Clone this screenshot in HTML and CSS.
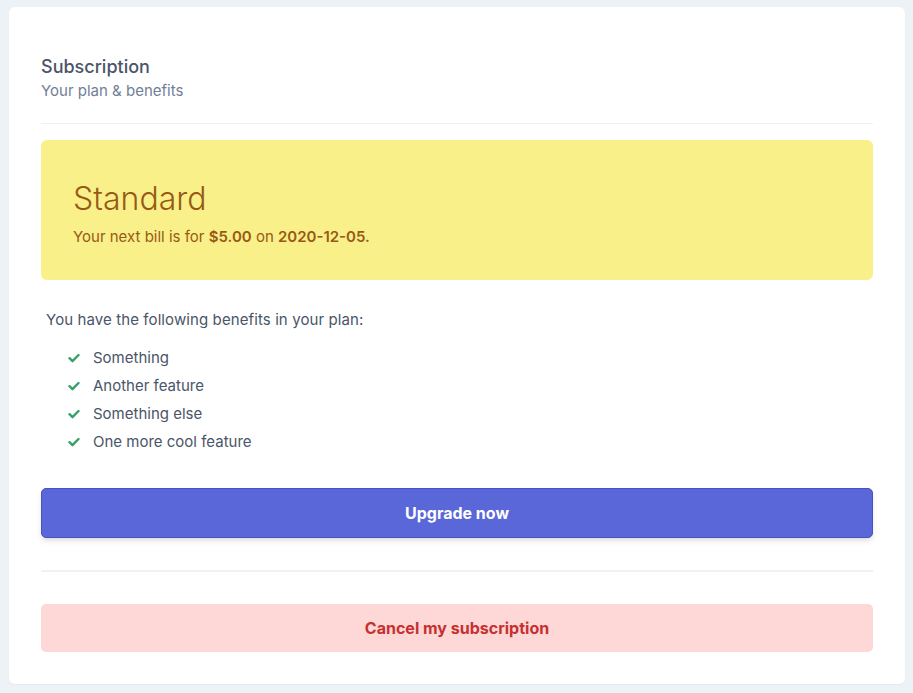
FILE: index.html
```html
<!DOCTYPE html>
<html lang="en">
  <head>
    <meta charset="utf-8" />
    <title>Subscription</title>
    <link rel="stylesheet" href="styles.css">
  </head>
  <body>
    <div class="card">
      <div class="header">
        <h3 class="title">Subscription</h3>
        <p class="subtitle">Your plan &amp; benefits</p>
      </div>

      <div class="plan">
        <h2 class="plan-name">Standard</h2>
        <p class="plan-bill">
          Your next bill is for <b>$5.00</b> on <b>2020-12-05.</b>
        </p>
      </div>

      <p class="benefits-intro">You have the following benefits in your plan:</p>
      <ul class="benefits">
        <li>
          <svg class="check" viewBox="0 0 12 12" width="12" height="12">
            <path d="M1.5 6.2l3 3 6-6.2" />
          </svg>
          Something
        </li>
        <li>
          <svg class="check" viewBox="0 0 12 12" width="12" height="12">
            <path d="M1.5 6.2l3 3 6-6.2" />
          </svg>
          Another feature
        </li>
        <li>
          <svg class="check" viewBox="0 0 12 12" width="12" height="12">
            <path d="M1.5 6.2l3 3 6-6.2" />
          </svg>
          Something else
        </li>
        <li>
          <svg class="check" viewBox="0 0 12 12" width="12" height="12">
            <path d="M1.5 6.2l3 3 6-6.2" />
          </svg>
          One more cool feature
        </li>
      </ul>

      <button class="btn btn-upgrade">Upgrade now</button>

      <hr class="divider" />

      <button class="btn btn-cancel">Cancel my subscription</button>
    </div>
  </body>
</html>
```

FILE: styles.css
```css
body {
  margin: 0;
  padding: 7px 8px 9px 9px;
  background-color: #edf2f7;
  font-family: Inter, "Noto Sans", sans-serif;
  color: #4a5568;
}

.card {
  background-color: white;
  border-radius: 6px;
  padding: 48px 32px 32px 32px;
  box-shadow: 0 1px 2px rgba(0, 0, 0, 0.04);
}

.header {
  padding-bottom: 20px;
  border-bottom: 1px solid #edf2f7;
}

.title {
  margin: 0;
  font-size: 18px;
  line-height: 24px;
  font-weight: 500;
  color: #4a5568;
}

.subtitle {
  margin: 0;
  font-size: 15px;
  line-height: 24px;
  color: #718096;
}

.plan {
  margin-top: 16px;
  background-color: #faf089;
  border-radius: 6px;
  padding: 39px 32px 31px 32px;
  color: #975a16;
}

.plan-name {
  margin: 0;
  font-size: 32px;
  line-height: 40px;
  font-weight: 300;
}

.plan-bill {
  margin: 6px 0 0 0;
  font-size: 15px;
  line-height: 24px;
}

.plan-bill b {
  font-weight: 600;
}

.benefits-intro {
  margin: 28px 0 0 5px;
  font-size: 15px;
  line-height: 24px;
  letter-spacing: 0.1px;
}

.benefits {
  list-style: none;
  margin: 12px 0 0 0;
  padding: 0 0 0 27px;
}

.benefits li {
  display: flex;
  align-items: center;
  gap: 13px;
  font-size: 15px;
  line-height: 28px;
  color: #4a5568;
}

.check {
  fill: none;
  stroke: #38a169;
  stroke-width: 2.4;
  stroke-linecap: round;
  stroke-linejoin: round;
}

.btn {
  display: block;
  width: 100%;
  border-radius: 5px;
  font-family: inherit;
  font-size: 16px;
  font-weight: 700;
  cursor: pointer;
}

.btn-upgrade {
  margin-top: 32px;
  height: 50px;
  background-color: #5a67d8;
  border: 1px solid #4c51bf;
  color: white;
  box-shadow: 0 4px 6px -1px rgba(0, 0, 0, 0.1), 0 2px 4px -1px rgba(0, 0, 0, 0.06);
}

.divider {
  margin: 32px 0 0 0;
  border: none;
  border-top: 2px solid #edf2f7;
}

.btn-cancel {
  margin-top: 32px;
  height: 48px;
  background-color: #fed7d7;
  border: none;
  color: #c53030;
}
```
